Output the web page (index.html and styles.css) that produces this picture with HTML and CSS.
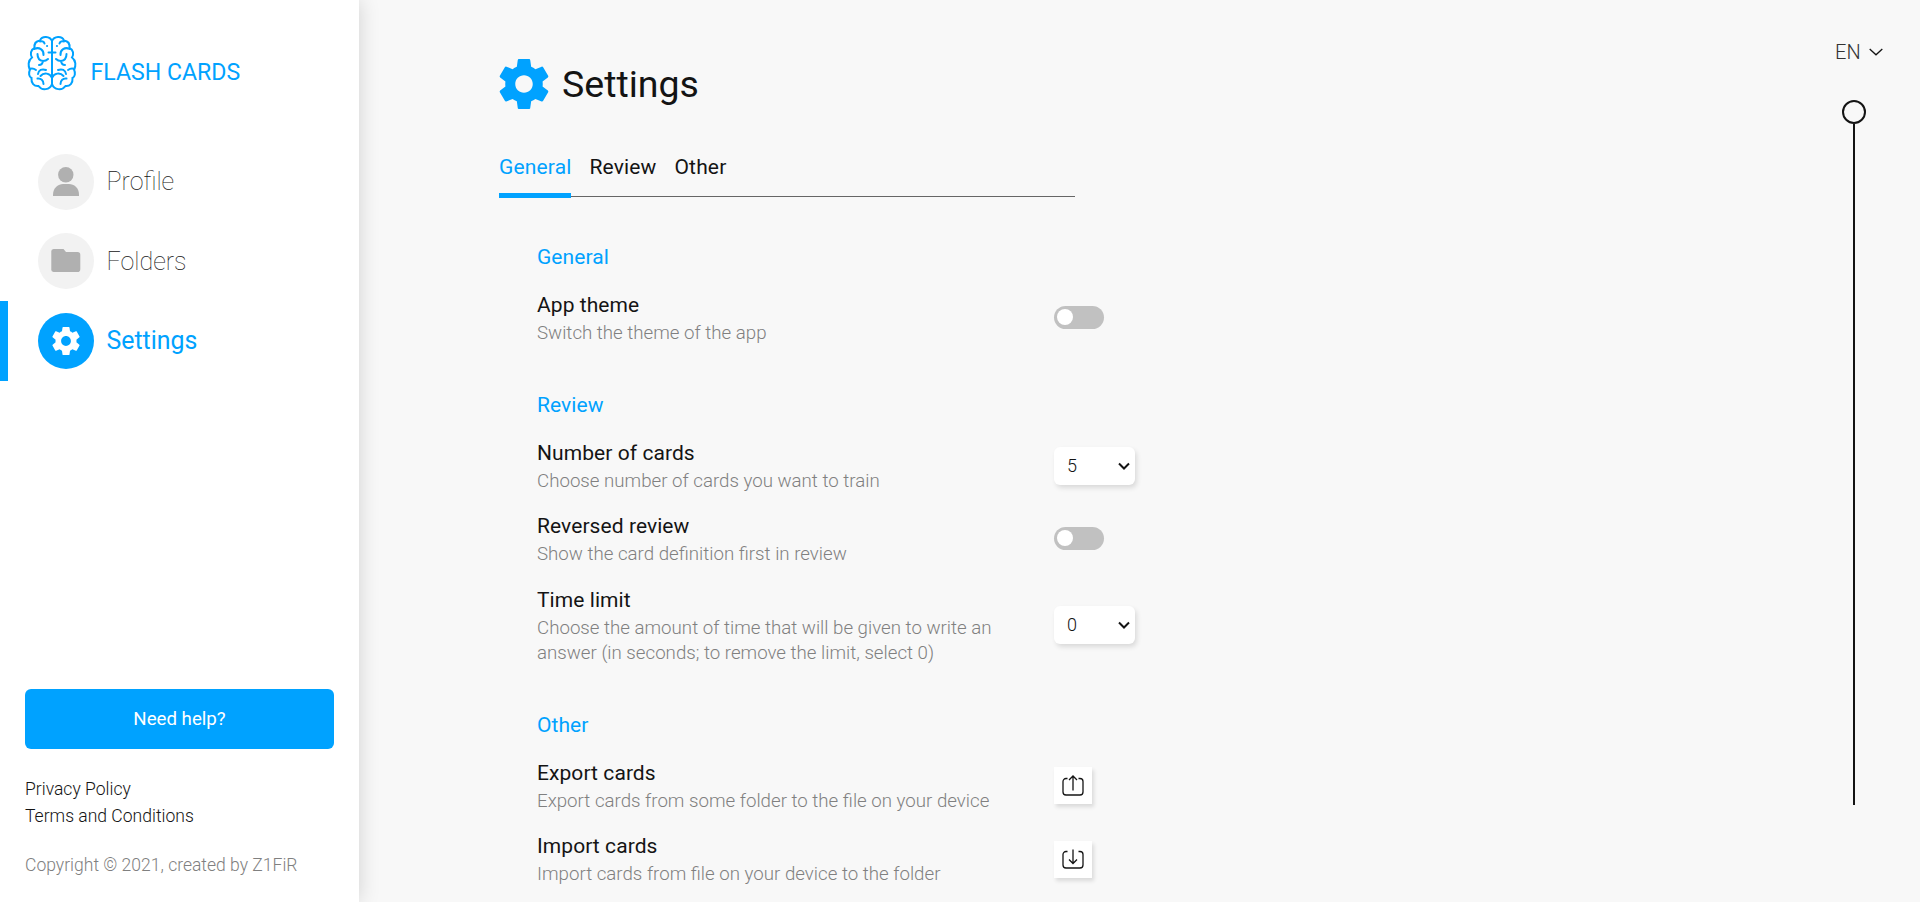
FILE: index.html
```html
<!DOCTYPE html>
<html lang="en">
<head>
<meta charset="utf-8">
<title>Flash Cards</title>
<link rel="stylesheet" href="styles.css">
</head>
<body>
<svg class="defs" width="0" height="0">
  <symbol id="gear" viewBox="2 2 20 20"><path d="M19.43 12.98c.04-.32.07-.64.07-.98s-.03-.66-.07-.98l2.11-1.65c.19-.15.24-.42.12-.64l-2-3.46c-.12-.22-.39-.3-.61-.22l-2.49 1c-.52-.4-1.08-.73-1.69-.98l-.38-2.65C14.46 2.18 14.25 2 14 2h-4c-.25 0-.46.18-.49.42l-.38 2.65c-.61.25-1.17.59-1.69.98l-2.49-1c-.23-.09-.49 0-.61.22l-2 3.46c-.13.22-.07.49.12.64l2.11 1.65c-.04.32-.07.65-.07.98s.03.66.07.98l-2.11 1.65c-.19.15-.24.42-.12.64l2 3.46c.12.22.39.3.61.22l2.49-1c.52.4 1.08.73 1.69.98l.38 2.65c.03.24.24.42.49.42h4c.25 0 .46-.18.49-.42l.38-2.65c.61-.25 1.17-.59 1.69-.98l2.49 1c.23.09.49 0 .61-.22l2-3.46c.12-.22.07-.49-.12-.64l-2.11-1.65zM12 15.5c-1.93 0-3.5-1.57-3.5-3.5s1.57-3.5 3.5-3.5 3.5 1.57 3.5 3.5-1.57 3.5-3.5 3.5z"/></symbol>
  <symbol id="hemisphere" viewBox="0 0 24 54" overflow="visible">
    <path d="M24 5C22 0 14-.5 12 4.500C8 5 6 8 6.500 12C2.500 14 2 18 4 21.500C-.1 24.500-.1 30 2 33.500C.3 37 1 41 3.500 42C3 47 6 50.500 10.500 50C14 55 22 54 24 48"/>
    <path d="M12 5.500C14.500 5 16 6 16.500 7.500M6.500 13C11 10.500 16 14 15.500 19M9.500 18C9.500 22 11 24.500 15 25C17 25 19 24 20 23M15 25C14.500 28 13 29 11 29M1.500 33C4 32 6 32.500 8 34M10 38C10.500 34 14 32.500 18 34M24 42C22 37 16 36 12.500 40M9.500 42.500C13 42 15.500 44.500 15.500 48M20.500 16.500H24"/>
    <path class="dot" d="M19 10h.1"/>
  </symbol>
</svg>
<div class="app">
  <aside class="sidebar">
    <a class="logo">
      <svg class="brain" viewBox="0 0 48 54"><use href="#hemisphere" width="24" height="54"/><use href="#hemisphere" width="24" height="54" transform="translate(48 0) scale(-1 1)"/><path d="M24 5V49"/></svg>
      <span>FLASH CARDS</span>
    </a>
    <nav class="nav">
      <a class="nav-item"><span class="bubble"><svg width="26" height="29" viewBox="0 0 26 29"><circle cx="12.800" cy="7.700" r="7.700"/><path d="M0 29v-1.500C0 21 5.500 17 10 17h6c5 0 10 4 10 10.500V29z"/></svg></span>Profile</a>
      <a class="nav-item"><span class="bubble"><svg width="30" height="24" viewBox="0 0 30 24"><path d="M2.500 0h10L15 3h11.500A2.800 2.800 0 0 1 29.300 5.800V20.200A2.800 2.800 0 0 1 26.500 23h-24A2.500 2.500 0 0 1 .3 20.200V2.800A2.500 2.500 0 0 1 2.500 0z"/></svg></span>Folders</a>
      <a class="nav-item active"><span class="bubble"><svg width="28" height="28"><use href="#gear"/></svg></span>Settings</a>
    </nav>
    <div class="side-foot">
      <button class="help">Need help?</button>
      <a>Privacy Policy</a>
      <a>Terms and Conditions</a>
      <p class="copyright">Copyright © 2021, created by Z1FiR</p>
    </div>
  </aside>
  <main class="content">
    <h1 class="title"><svg width="50" height="52"><use href="#gear"/></svg>Settings</h1>
    <div class="tabs"><a class="tab active">General</a><a class="tab">Review</a><a class="tab">Other</a></div>
    <section class="group">
      <h2>General</h2>
      <div class="row"><div class="info"><h3>App theme</h3><p>Switch the theme of the app</p></div><span class="toggle"></span></div>
    </section>
    <section class="group">
      <h2>Review</h2>
      <div class="row"><div class="info"><h3>Number of cards</h3><p>Choose number of cards you want to train</p></div><div class="select">5<svg width="12" height="8" viewBox="0 0 12 8"><path d="M1 1.500l5 5 5-5"/></svg></div></div>
      <div class="row"><div class="info"><h3>Reversed review</h3><p>Show the card definition first in review</p></div><span class="toggle"></span></div>
      <div class="row"><div class="info"><h3>Time limit</h3><p>Choose the amount of time that will be given to write an answer (in seconds; to remove the limit, select 0)</p></div><div class="select">0<svg width="12" height="8" viewBox="0 0 12 8"><path d="M1 1.500l5 5 5-5"/></svg></div></div>
    </section>
    <section class="group">
      <h2>Other</h2>
      <div class="row"><div class="info"><h3>Export cards</h3><p>Export cards from some folder to the file on your device</p></div><button class="file"><svg width="22" height="22" viewBox="0 0 22 22"><path d="M5.500 3.500H4A3 3 0 0 0 1 6.500V17a3 3 0 0 0 3 3H18a3 3 0 0 0 3-3V6.500a3 3 0 0 0-3-3H16.500M11 15.500V1M7 5L11 1l4 4"/></svg></button></div>
      <div class="row"><div class="info"><h3>Import cards</h3><p>Import cards from file on your device to the folder</p></div><button class="file"><svg width="22" height="22" viewBox="0 0 22 22"><path d="M5.500 3.500H4A3 3 0 0 0 1 6.500V17a3 3 0 0 0 3 3H18a3 3 0 0 0 3-3V6.500a3 3 0 0 0-3-3H16.500M11 1.500V15.500M7 11.500L11 15.500l4-4"/></svg></button></div>
    </section>
  </main>
  <aside class="rail">
    <div class="lang">EN<svg width="14" height="8" viewBox="0 0 14 8"><path d="M.7 1L7 6.800 13.300 1"/></svg></div>
    <div class="scroll"><span class="knob"></span><span class="track"></span></div>
  </aside>
</div>
</body>
</html>
```
FILE: styles.css
```css
* { box-sizing: border-box; margin: 0; padding: 0; }
body { font-family: Roboto, "Liberation Sans", sans-serif; color: #141414; background: #f8f8f8; overflow: hidden; }
button { border: 0; font: inherit; }
h1, h2, h3 { font-weight: 400; }
.defs { display: block; position: absolute; }
.app { display: flex; height: 902px; }

.sidebar { width: 359px; flex: none; background: #fff; box-shadow: 0 0 20px rgba(0,0,0,.16); display: flex; flex-direction: column; }
.logo { display: flex; gap: 14.500px; padding: 36px 0 0 28px; height: 142px; color: #00a2ff; font-size: 23.100px; line-height: 28px; }
.logo span { padding-top: 23px; }
.brain { width: 48px; height: 54px; fill: none; stroke: currentColor; stroke-width: 2; stroke-linecap: round; overflow: visible; }
.nav-item { display: flex; align-items: center; gap: 12.500px; height: 79.500px; padding-left: 38px; font-size: 25px; font-weight: 100; }
.bubble { width: 56px; height: 56px; border-radius: 50%; background: #f2f2f2; display: flex; align-items: center; justify-content: center; fill: #b0b0b0; }
.nav-item.active { border-left: 8px solid #00a2ff; padding-left: 30px; color: #00a2ff; font-size: 24.900px; font-weight: 400; }
.active .bubble { background: #00a2ff; fill: #fff; }
.side-foot { margin-top: auto; padding: 0 25px 23px; display: flex; flex-direction: column; font-size: 17.550px; line-height: 27px; font-weight: 300; }
.help { height: 60px; padding-top: 1px; border-radius: 6px; background: #00a2ff; color: #fff; font-size: 18.700px; font-weight: 400; margin-bottom: 27px; }
.copyright { margin-top: 22px; color: #808080; }

.content { flex: 1; padding: 58px 0 0 140px; }
.title { display: flex; align-items: center; gap: 13px; height: 52px; font-size: 37.500px; fill: #00a2ff; }
.tabs { display: flex; gap: 18px; width: 576px; height: 52px; margin-top: 35px; border-bottom: 1px solid #666; }
.tab { font-size: 21px; letter-spacing: .15px; line-height: 24px; height: 53px; padding-top: 10px; }
.tabs .active { color: #00a2ff; border-bottom: 5px solid #00a2ff; }
.group { padding-left: 38px; margin-top: 46px; }
.group h2 { color: #00a2ff; font-size: 21px; letter-spacing: .07px; line-height: 28px; margin-bottom: 20px; }
.row { display: flex; align-items: center; margin-bottom: 19.400px; }
.info { width: 517px; padding-right: 48px; }
.info h3 { font-size: 21px; letter-spacing: .07px; line-height: 28px; }
.info p { font-size: 18.700px; line-height: 25px; font-weight: 300; color: #808080; margin: 2px 0 -1px; }
.row:last-child { margin-bottom: 0; }
.toggle { width: 50px; height: 23px; border-radius: 12px; background: #c1c1c1; padding: 3px; margin-bottom: 1px; }
.toggle::before { content: ""; display: block; width: 16px; height: 16px; border-radius: 50%; background: #fff; }
.select { width: 81px; height: 38px; border-radius: 6px; background: #fff; box-shadow: 2px 3px 5px rgba(0,0,0,.12); display: flex; align-items: center; justify-content: space-between; padding: 0 5px 1px 13px; font-size: 18px; font-weight: 300; }
.select svg { fill: none; stroke: #141414; stroke-width: 2; }
.file { width: 38px; height: 37px; background: #fff; box-shadow: 2px 3px 4px rgba(0,0,0,.12); display: flex; align-items: center; justify-content: center; }
.file svg { fill: none; stroke: #141414; stroke-width: 1.300; }

.rail { width: 85px; padding-top: 40px; }
.lang { display: flex; align-items: center; gap: 8px; font-size: 20px; line-height: 24px; font-weight: 300; color: #333; }
.lang svg { fill: none; stroke: #141414; stroke-width: 1.300; }
.scroll { width: 24px; margin: 36px 0 0 7px; display: flex; flex-direction: column; align-items: center; }
.knob { width: 24px; height: 24px; border: 2px solid #141414; border-radius: 50%; }
.track { width: 2px; height: 681px; background: #141414; }
```
